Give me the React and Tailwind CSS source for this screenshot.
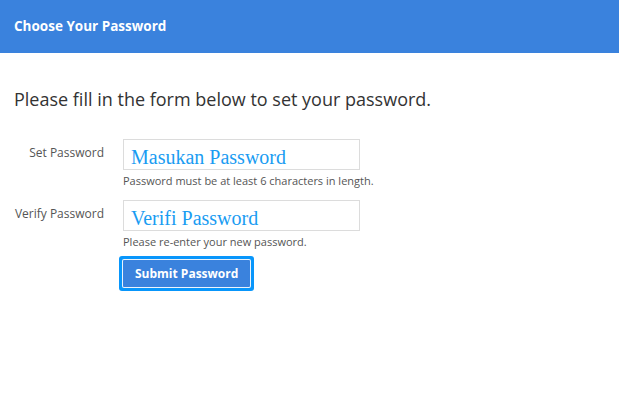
import React from 'react';

const Field = ({ label, placeholder, help }) => (
  <div className="flex items-start">
    <label className="w-[90px] shrink-0 pt-[6px] text-right text-[12px] leading-[16px] text-[#555]">{label}</label>
    <div className="ml-[19px]">
      <input
        type="password"
        placeholder={placeholder}
        className="block h-[31px] w-[237px] border border-[#dcdcdc] bg-white px-[7px] pt-[6px] text-[20px] leading-[24px] outline-none placeholder:text-[#1a9cf2]"
        style={{ fontFamily: '"Liberation Serif", "DejaVu Serif", serif' }}
      />
      <p className="mt-[3px] text-[11px] leading-[15px] text-[#555]">{help}</p>
    </div>
  </div>
);

const App = () => {
  return (
    <div className="min-h-[403px] w-full bg-white" style={{ fontFamily: '"Open Sans", "Noto Sans", sans-serif' }}>
      <div className="flex h-[53px] items-center bg-[#3a82dd] px-[14px]">
        <h1 className="text-[13.5px] font-bold text-white">Choose Your Password</h1>
      </div>

      <div className="px-[14px] pt-[34px]">
        <h2 className="text-[18px] leading-[24px] text-[#333]">Please fill in the form below to set your password.</h2>

        <form className="mt-[28px] flex flex-col">
          <Field label="Set Password" placeholder="Masukan Password" help="Password must be at least 6 characters in length." />
          <div className="mt-[12px]">
            <Field label="Verify Password" placeholder="Verifi Password" help="Please re-enter your new password." />
          </div>
          <div className="ml-[105px] mt-[7px]">
            <button type="button" className="rounded-[3px] bg-[#0896fb] p-[3px]">
              <span className="block rounded-[2px] border border-white/90 bg-[#3a82dd] px-[12px] py-[5px] text-[12px] font-bold leading-[17px] text-white">
                Submit Password
              </span>
            </button>
          </div>
        </form>
      </div>
    </div>
  );
};

export default App;
